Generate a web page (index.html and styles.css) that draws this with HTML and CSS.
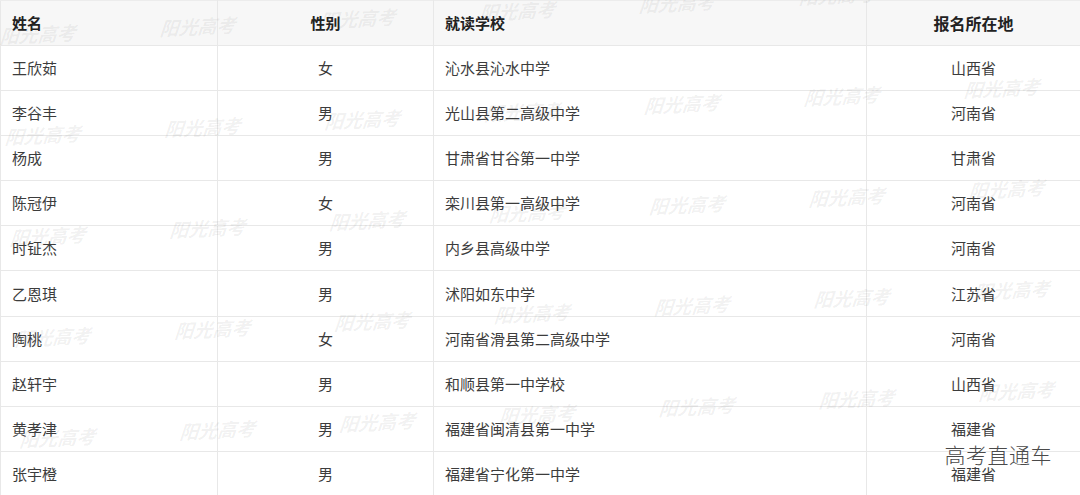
FILE: index.html
```html
<!DOCTYPE html>
<html lang="zh-CN">
<head>
<meta charset="utf-8">
<title>名单</title>
<link rel="stylesheet" href="styles.css">
</head>
<body>
<div class="page">
  <table class="roster">
    <colgroup>
      <col class="c-name">
      <col class="c-sex">
      <col class="c-school">
      <col class="c-place">
    </colgroup>
    <thead>
      <tr><th class="left">姓名</th><th>性别</th><th class="left">就读学校</th><th>报名所在地</th></tr>
    </thead>
    <tbody>
      <tr><td class="left">王欣茹</td><td>女</td><td class="left">沁水县沁水中学</td><td>山西省</td></tr>
      <tr><td class="left">李谷丰</td><td>男</td><td class="left">光山县第二高级中学</td><td>河南省</td></tr>
      <tr><td class="left">杨成</td><td>男</td><td class="left">甘肃省甘谷第一中学</td><td>甘肃省</td></tr>
      <tr><td class="left">陈冠伊</td><td>女</td><td class="left">栾川县第一高级中学</td><td>河南省</td></tr>
      <tr><td class="left">时钲杰</td><td>男</td><td class="left">内乡县高级中学</td><td>河南省</td></tr>
      <tr class="tall"><td class="left">乙恩琪</td><td>男</td><td class="left">沭阳如东中学</td><td>江苏省</td></tr>
      <tr><td class="left">陶桃</td><td>女</td><td class="left">河南省滑县第二高级中学</td><td>河南省</td></tr>
      <tr><td class="left">赵轩宇</td><td>男</td><td class="left">和顺县第一中学校</td><td>山西省</td></tr>
      <tr><td class="left">黄孝津</td><td>男</td><td class="left">福建省闽清县第一中学</td><td>福建省</td></tr>
      <tr><td class="left">张宇橙</td><td>男</td><td class="left">福建省宁化第一中学</td><td>福建省</td></tr>
    </tbody>
  </table>

  <div class="watermarks" aria-hidden="true">
    <div class="wm-grid">
      <span>阳光高考</span><span>阳光高考</span><span>阳光高考</span><span>阳光高考</span><span>阳光高考</span><span>阳光高考</span><span>阳光高考</span>
      <span>阳光高考</span><span>阳光高考</span><span>阳光高考</span><span>阳光高考</span><span>阳光高考</span><span>阳光高考</span><span>阳光高考</span>
      <span>阳光高考</span><span>阳光高考</span><span>阳光高考</span><span>阳光高考</span><span>阳光高考</span><span>阳光高考</span><span>阳光高考</span>
      <span>阳光高考</span><span>阳光高考</span><span>阳光高考</span><span>阳光高考</span><span>阳光高考</span><span>阳光高考</span><span>阳光高考</span>
      <span>阳光高考</span><span>阳光高考</span><span>阳光高考</span><span>阳光高考</span><span>阳光高考</span><span>阳光高考</span><span>阳光高考</span>
    </div>
  </div>

  <div class="brand">高考直通车</div>
</div>
</body>
</html>
```

FILE: styles.css
```css
html, body {
  margin: 0;
  padding: 0;
  background: #ffffff;
}

body {
  font-family: "Noto Sans CJK SC", "Noto Sans", sans-serif;
  color: #3a3a3a;
  overflow: hidden;
}

.page {
  position: relative;
  width: 1080px;
  height: 495px;
  overflow: hidden;
}

.roster {
  width: 1080px;
  border-collapse: collapse;
  table-layout: fixed;
  font-size: 15px;
}

.c-name { width: 217px; }
.c-sex { width: 216px; }
.c-school { width: 433px; }
.c-place { width: 214px; }

.roster th,
.roster td {
  height: 44px;
  padding: 0 11px;
  border: 1px solid #e8e8e8;
  text-align: center;
  vertical-align: middle;
  line-height: 20px;
  white-space: nowrap;
}

.roster tr.tall td {
  height: 45px;
}

.roster th {
  background: #f7f7f7;
  color: #222222;
  font-weight: 700;
  border-top-color: #ececec;
}

.roster th:last-child {
  font-size: 16px;
}

.roster td {
  color: #3c3c3c;
}

.roster .left {
  text-align: left;
}

.watermarks {
  position: absolute;
  inset: 0;
  pointer-events: none;
}

.wm-grid {
  position: absolute;
  left: -6px;
  top: 25px;
  display: grid;
  grid-template-columns: repeat(7, 160px);
  grid-auto-rows: 101px;
  transform: rotate(-2.8deg);
  transform-origin: 0 0;
}

.wm-grid span {
  font-family: "Noto Sans CJK SC", sans-serif;
  font-size: 19px;
  line-height: 22px;
  font-weight: 700;
  font-style: italic;
  color: rgba(60, 60, 60, 0.07);
  transform: skewX(-8deg);
  display: block;
  width: 80px;
}

.brand {
  position: absolute;
  right: 28px;
  top: 441px;
  font-size: 21px;
  line-height: 26px;
  color: #4a4a4a;
  font-weight: 300;
  letter-spacing: 0.5px;
  text-shadow: 0 0 2px #ffffff, 0 0 2px #ffffff;
}
```
